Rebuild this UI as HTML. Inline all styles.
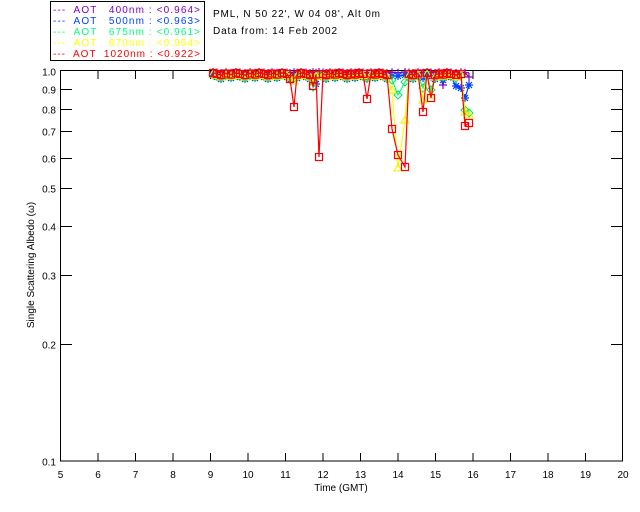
<!DOCTYPE html>
<html><head><meta charset="utf-8"><style>
html,body{margin:0;padding:0;background:#fff;width:640px;height:512px;overflow:hidden}
svg{display:block}
text{font-family:"Liberation Sans",sans-serif;font-size:10px;white-space:pre}
</style></head><body>
<svg id="s" width="640" height="512" xmlns="http://www.w3.org/2000/svg">
<rect x="50.5" y="1.5" width="154" height="59" fill="none" stroke="#000"/>
<text x="53" y="13" fill="#7f00c0" textLength="147" lengthAdjust="spacing">---  AOT   400nm : &lt;0.964&gt;</text>
<text x="53" y="24" fill="#0040ff" textLength="147" lengthAdjust="spacing">---  AOT   500nm : &lt;0.963&gt;</text>
<text x="53" y="35" fill="#00ff80" textLength="147" lengthAdjust="spacing">---  AOT   675nm : &lt;0.961&gt;</text>
<text x="53" y="46" fill="#ffff00" textLength="147" lengthAdjust="spacing">---  AOT   870nm : &lt;0.954&gt;</text>
<text x="53" y="57" fill="#ff0000" textLength="147" lengthAdjust="spacing">---  AOT  1020nm : &lt;0.922&gt;</text>
<text x="213" y="17" textLength="167" lengthAdjust="spacing">PML, N 50 22', W 04 08', Alt 0m</text>
<text x="213" y="34" textLength="124" lengthAdjust="spacing">Data from: 14 Feb 2002</text>
<rect x="60.5" y="70.5" width="562" height="390.5" fill="none" stroke="#000"/>
<g id="ax" stroke="#000"></g>
<g id="lab"></g>
<text x="341" y="491" text-anchor="middle">Time (GMT)</text>
<text transform="translate(34,265) rotate(-90)" text-anchor="middle">Single Scattering Albedo (ω)</text>
<g id="data"></g>
</svg>
<script>
var NS="http://www.w3.org/2000/svg";
function el(p,t,a,txt){var e=document.createElementNS(NS,t);for(var k in a)e.setAttribute(k,a[k]);if(txt!==undefined)e.textContent=txt;p.appendChild(e);return e;}
var ax=document.getElementById('ax'),lab=document.getElementById('lab'),data=document.getElementById('data');
for(var h=5;h<=20;h++){var x=60.5+(h-5)*37.5;
 if(h>5&&h<20){el(ax,'line',{x1:x,y1:461,x2:x,y2:453});el(ax,'line',{x1:x,y1:71,x2:x,y2:79});}
 el(lab,'text',{x:x,y:478,'text-anchor':'middle'},String(h));}
function Y(v){return 461-390*Math.log10(v/0.1);}
[1.0,0.9,0.8,0.7,0.6,0.5,0.4,0.3,0.2,0.1].forEach(function(v){var y=Math.round(Y(v))+0.5;
 if(v<1&&v>0.1){el(ax,'line',{x1:60,y1:y,x2:72,y2:y});el(ax,'line',{x1:623,y1:y,x2:611,y2:y});}
 el(lab,'text',{x:56,y:y+4,'text-anchor':'end'},v.toFixed(1));});
var xs=[213,217,221,226,231,236,240,245,250,255,259,264,268,272,277,282,287,290,294,297,301,306,310,313,316,319,323,326,330,335,339,343,347,351,355,359,363,367,371,375,379,383,387,392,398,405,409,413,418,423,427,431,435,439,443,447,451,456,461,465,469];
function ser(dips,base,amp){return xs.map(function(x,i){return [x,dips[x]!==undefined?dips[x]:base+((i*7)%5)*amp/4];});}
var red=ser({290:79,294:107,313:86,319:157,367:99,392:129,398:155,405:167,423:112,431:98,456:75,461:74,465:126,469:123},73,2);
var yel=ser({294:81,313:82,319:76,392:90,398:168,405:120,423:100,431:95,465:112,469:115},74,3);
var grn=ser({294:78,313:87,398:95,392:80,405:82,423:88,431:90,465:110,469:113},75,3);
var blu=ser({290:80,313:82,316:84,398:76,443:80,449:84,456:86,461:88,465:98,469:85},75,4);
var pur=ser({443:85,449:89,469:77},72,1);
function line(pts,c){el(data,'polyline',{points:pts.map(function(p){return p.join(',')}).join(' '),fill:'none',stroke:c,'stroke-width':1.2});}
function mark(pts,c,type){pts.forEach(function(p){var x=p[0],y=p[1];
 if(type=='sq')el(data,'rect',{x:x-3.5,y:y-3.5,width:7,height:7,fill:'none',stroke:c,'stroke-width':1.2});
 else if(type=='tri')el(data,'polygon',{points:(x)+','+(y-4)+' '+(x-4)+','+(y+3)+' '+(x+4)+','+(y+3),fill:'none',stroke:c});
 else if(type=='dia')el(data,'polygon',{points:x+','+(y-4)+' '+(x+4)+','+y+' '+x+','+(y+4)+' '+(x-4)+','+y,fill:'none',stroke:c});
 else if(type=='ast')el(data,'path',{d:'M'+(x-4)+' '+y+'h8M'+x+' '+(y-4)+'v8M'+(x-3)+' '+(y-3)+'l6 6M'+(x+3)+' '+(y-3)+'l-6 6',stroke:c,'stroke-width':1.2});
 else el(data,'path',{d:'M'+(x-4)+' '+y+'h8M'+x+' '+(y-4)+'v8',stroke:c,'stroke-width':1.2});});}
line(pur,'#7f00c0');mark(pur,'#7f00c0','plus');
line(blu,'#0040ff');mark(blu,'#0040ff','ast');
line(grn,'#00ff80');mark(grn,'#00e070','dia');
line(yel,'#ffff00');mark(yel,'#f0f000','tri');
line(red,'#ff0000');mark(red,'#ff0000','sq');
</script>
</body></html>
